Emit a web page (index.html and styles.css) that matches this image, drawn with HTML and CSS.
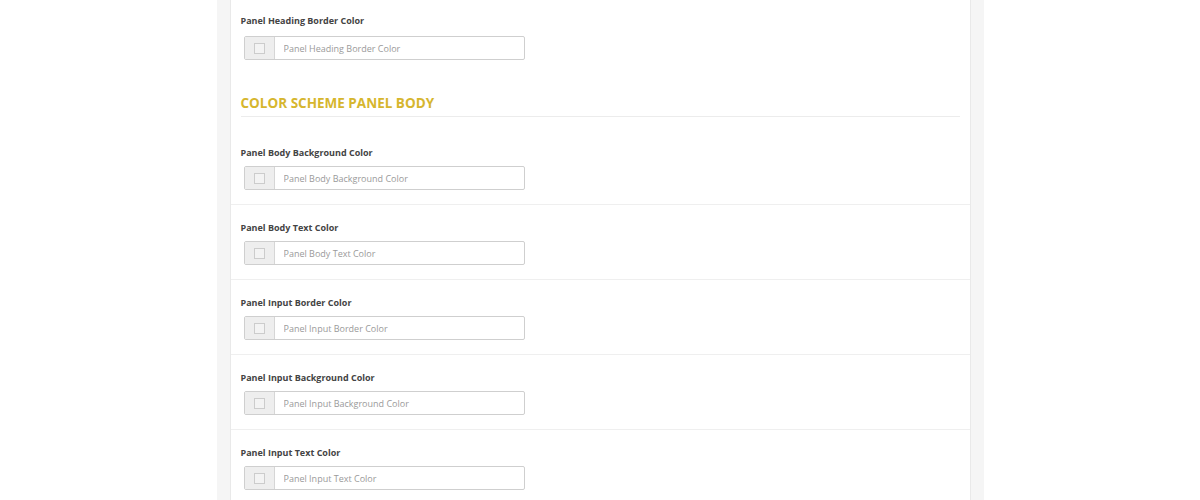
FILE: index.html
```html
<!DOCTYPE html>
<html lang="en">
<head>
    <meta charset="UTF-8">
    <title>Color Scheme Settings</title>
    <link rel="stylesheet" href="styles.css">
</head>
<body>
    <div class="wrap">
        <div class="panel">
            <div class="field first">
                <label>Panel Heading Border Color</label>
                <div class="color-input">
                    <span class="swatch"><i></i></span>
                    <input type="text" placeholder="Panel Heading Border Color">
                </div>
            </div>

            <!-- Panel body colors -->
            <h3 class="section-title">Color Scheme Panel Body</h3>

            <div class="field">
                <label>Panel Body Background Color</label>
                <div class="color-input">
                    <span class="swatch"><i></i></span>
                    <input type="text" placeholder="Panel Body Background Color">
                </div>
            </div>
            <div class="field">
                <label>Panel Body Text Color</label>
                <div class="color-input">
                    <span class="swatch"><i></i></span>
                    <input type="text" placeholder="Panel Body Text Color">
                </div>
            </div>
            <div class="field">
                <label>Panel Input Border Color</label>
                <div class="color-input">
                    <span class="swatch"><i></i></span>
                    <input type="text" placeholder="Panel Input Border Color">
                </div>
            </div>
            <div class="field">
                <label>Panel Input Background Color</label>
                <div class="color-input">
                    <span class="swatch"><i></i></span>
                    <input type="text" placeholder="Panel Input Background Color">
                </div>
            </div>
            <div class="field">
                <label>Panel Input Text Color</label>
                <div class="color-input">
                    <span class="swatch"><i></i></span>
                    <input type="text" placeholder="Panel Input Text Color">
                </div>
            </div>
        </div>
    </div>
</body>
</html>
```

FILE: styles.css
```css
/* Settings page */
:root {
    --page-bg: #ffffff;
    --frame-bg: #f5f5f5;
    --line: #efefef;
    --label: #444444;
    --accent: #d6b62e;
}

body {
    margin: 0;
    background-color: var(--page-bg);
    font-family: 'Open Sans', 'Noto Sans', sans-serif;
    overflow: hidden;
}

.wrap {
    width: 741px;
    margin: 0 auto;
    padding: 0 13px;
    background-color: var(--frame-bg);
    min-height: 500px;
}

.panel {
    background-color: #fff;
    border-left: 1px solid #e9e9e9;
    border-right: 1px solid #e9e9e9;
    min-height: 500px;
}

.field {
    padding: 15px 10px 14px;
    border-bottom: 1px solid var(--line);
}

.field:last-child {
    border-bottom: none;
}

.field.first {
    padding-top: 13px;
    border-bottom: none;
}

.field label {
    display: block;
    font-size: 9px;
    font-weight: 700;
    line-height: 16px;
    color: var(--label);
    margin-bottom: 5px;
}

.field.first label {
    margin-bottom: 7px;
}

.color-input {
    display: flex;
    width: 279px;
    height: 22px;
    margin-left: 3px;
    border: 1px solid #cfcfcf;
    border-radius: 2px;
    background: #fff;
    overflow: hidden;
}

.swatch {
    width: 29px;
    flex: none;
    display: flex;
    align-items: center;
    justify-content: center;
    background-color: #eeeeee;
    border-right: 1px solid #d6d6d6;
}

.swatch i {
    width: 9px;
    height: 9px;
    border: 1px solid #cccccc;
    background: #f3f3f3;
}

.color-input input {
    flex: 1;
    border: none;
    outline: none;
    padding: 0 9px;
    font-family: inherit;
    font-size: 9px;
    color: #555;
    background: transparent;
}

.color-input input::placeholder {
    color: #9a9a9a;
}

.section-title {
    margin: 19px 10px 13px 10px;
    padding-bottom: 3px;
    border-bottom: 1px solid #ececec;
    font-size: 13.5px;
    line-height: 20px;
    font-weight: 700;
    text-transform: uppercase;
    color: var(--accent);
}
```
